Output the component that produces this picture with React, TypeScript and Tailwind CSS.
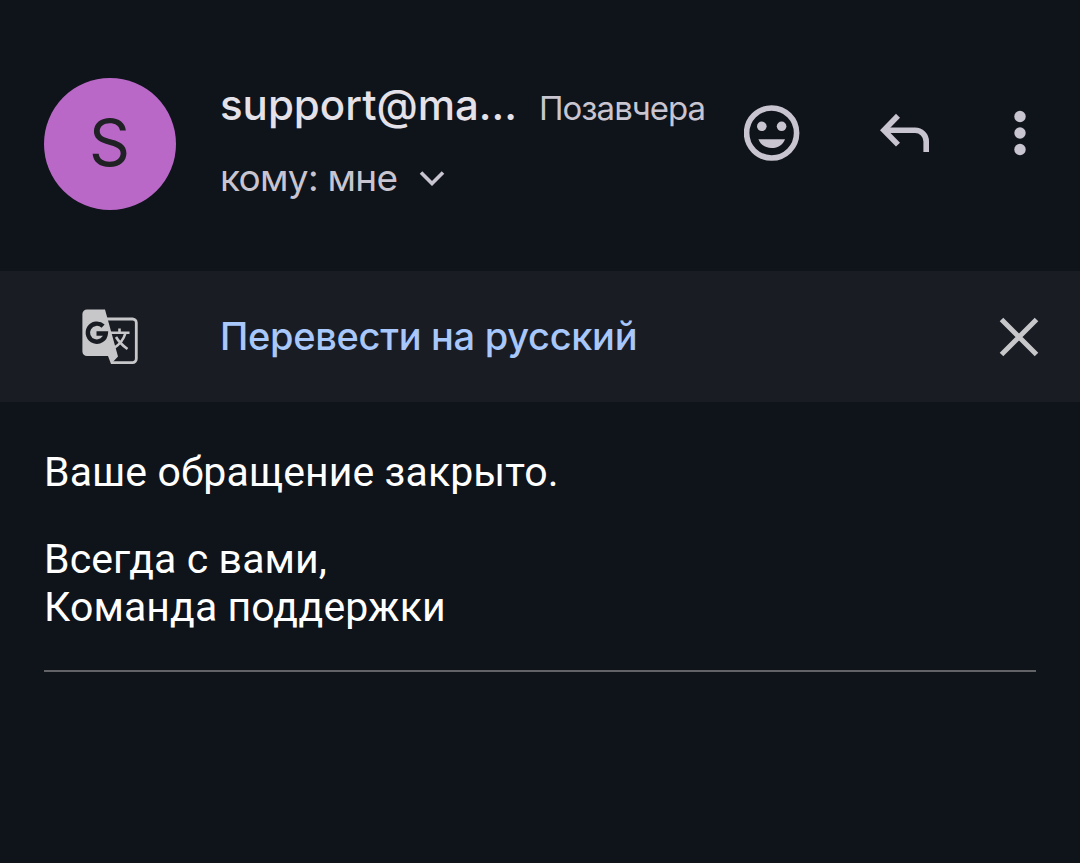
import type { ReactNode } from "react";

const message = {
  sender: "support@ma...",
  initial: "S",
  date: "Позавчера",
  recipient: "кому: мне",
  body: [["Ваше обращение закрыто."], ["Всегда с вами,", "Команда поддержки"]],
};

const IconButton = ({ label, className, children }: { label: string; className: string; children: ReactNode }) => (
  <button type="button" aria-label={label} className={`shrink-0 ${className}`}>
    {children}
  </button>
);

const SmileIcon = () => (
  <svg width="56" height="56" viewBox="0 0 56 56" fill="none">
    <circle cx="27.6" cy="28" r="25" stroke="currentColor" strokeWidth="5.6" />
    <circle cx="17.8" cy="21.3" r="4.8" fill="currentColor" />
    <circle cx="37.6" cy="21.3" r="4.8" fill="currentColor" />
    <path d="M14.4 34.2H41c-2 5.4-7 8.9-13.3 8.9s-11.3-3.5-13.3-8.9z" fill="currentColor" />
  </svg>
);

const ReplyIcon = () => (
  <svg width="50" height="40" viewBox="0 0 50 40" fill="none" stroke="currentColor" strokeWidth="5.6">
    <path d="M18 2.8 3.9 17.2 18 31.6" />
    <path d="M4 17.2h31c6.2 0 11.2 5 11.2 11.2V39" />
  </svg>
);

const MoreIcon = () => (
  <svg width="12" height="46" viewBox="0 0 12 46" fill="currentColor">
    <circle cx="6" cy="6.5" r="5.7" />
    <circle cx="6" cy="23" r="5.7" />
    <circle cx="6" cy="39.5" r="5.7" />
  </svg>
);

const TranslateIcon = () => (
  <svg width="56" height="56" viewBox="0 0 56 56" fill="none">
    <path d="M25 10h25.5a3.8 3.8 0 0 1 3.8 3.8v36a3.8 3.8 0 0 1-3.8 3.8H29" stroke="currentColor" strokeWidth="2.8" />
    <path d="M5 .5h18L36 47.5 29 55 26 47H5a4.6 4.6 0 0 1-4.6-4.6V5A4.6 4.6 0 0 1 5 .5z" fill="currentColor" />
    <path d="M21.1 17.2a9 9 0 1 0 2.7 7.3H14.5" stroke="#1a1c24" strokeWidth="4.4" />
    <path d="M28.5 23.7h19M37.5 19.5v4M43.5 24c-2 7-6 11.5-11.5 15M34 28c3 5 6.5 8.5 11.5 12" stroke="currentColor" strokeWidth="2.6" />
  </svg>
);

const CloseIcon = () => (
  <svg width="40" height="40" viewBox="0 0 40 40" fill="none" stroke="currentColor" strokeWidth="5">
    <path d="m2.5 2.5 35 35M37.5 2.5l-35 35" />
  </svg>
);

const MessageHeader = () => (
  <header className="flex h-[271px] items-start pl-11 text-[#c8c5d0]">
    <div className="mt-[78px] flex size-[132px] shrink-0 items-center justify-center rounded-full bg-[#ba68c8] text-[#202124]">
      <span className="pr-px pb-[3px] text-[64px] leading-none">{message.initial}</span>
    </div>
    <div className="mt-[69px] ml-11 w-[524px] shrink-0 whitespace-nowrap">
      <div className="flex items-baseline leading-[72px]">
        <span className="w-[319px] text-[42px] font-medium text-[#e4e1e9]">{message.sender}</span>
        <span className="text-[33px] tracking-[-1px]">{message.date}</span>
      </div>
      <div className="-mt-[2px] flex items-center leading-[72px]">
        <span className="w-[199px] text-[37px] tracking-[-0.7px]">{message.recipient}</span>
        <svg width="26" height="16" viewBox="0 0 26 16" fill="none" stroke="currentColor" strokeWidth="3.6">
          <path d="m2 2.5 11 11 11-11" />
        </svg>
      </div>
    </div>
    <IconButton label="Реакция" className="mt-[105px]">
      <SmileIcon />
    </IconButton>
    <IconButton label="Ответить" className="mt-[113px] ml-20">
      <ReplyIcon />
    </IconButton>
    <IconButton label="Ещё" className="mt-[110px] ml-[84px]">
      <MoreIcon />
    </IconButton>
  </header>
);

const TranslateBar = () => (
  <div className="flex h-[131px] items-center bg-[#1a1c24] pr-[41px] pl-[82px] text-[#c7c7c9]">
    <TranslateIcon />
    <button type="button" className="ml-[82px] text-[38px] font-medium tracking-[-0.3px] whitespace-nowrap text-[#a8c7fa]">
      Перевести на русский
    </button>
    <IconButton label="Закрыть" className="ml-auto">
      <CloseIcon />
    </IconButton>
  </div>
);

const App = () => {
  return (
    <div className="min-h-screen w-full overflow-hidden bg-[#0f131a] font-['Inter','Noto_Sans',sans-serif]">
      <MessageHeader />
      <TranslateBar />
      <main className="mx-11 mt-[46px] border-b-2 border-[#616367] pb-[39px] font-['Roboto',sans-serif] text-[41px] leading-[48px] tracking-[0.1px] text-white">
        {message.body.map((lines, i) => (
          <p key={i} className="mb-[39px] last:mb-0">
            {lines.map((line) => (
              <span key={line} className="block">
                {line}
              </span>
            ))}
          </p>
        ))}
      </main>
    </div>
  );
};

export default App;
